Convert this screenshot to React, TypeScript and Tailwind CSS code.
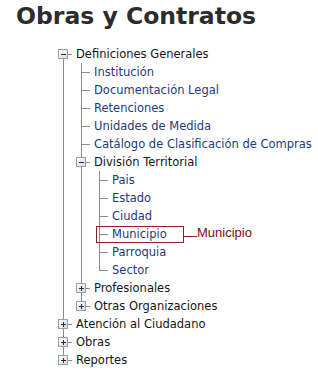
import type { ReactNode } from 'react';

type Node = {
  label: string;
  open?: boolean;
  children?: Node[];
  mark?: boolean;
};

const tree: Node[] = [
  {
    label: 'Definiciones Generales',
    open: true,
    children: [
      { label: 'Institución' },
      { label: 'Documentación Legal' },
      { label: 'Retenciones' },
      { label: 'Unidades de Medida' },
      { label: 'Catálogo de Clasificación de Compras' },
      {
        label: 'División Territorial',
        open: true,
        children: [
          { label: 'Pais' },
          { label: 'Estado' },
          { label: 'Ciudad' },
          { label: 'Municipio', mark: true },
          { label: 'Parroquia' },
          { label: 'Sector' },
        ],
      },
      { label: 'Profesionales', children: [{ label: '' }] },
      { label: 'Otras Organizaciones', children: [{ label: '' }] },
    ],
  },
  { label: 'Atención al Ciudadano', children: [{ label: '' }] },
  { label: 'Obras', children: [{ label: '' }] },
  { label: 'Reportes', children: [{ label: '' }] },
];

const LINE = '#8c8c8c';

// one 18x18 gutter cell of the tree connectors
function Cell({ kind, top = true, bottom = false, open = false }: { kind: 'pipe' | 'blank' | 'leaf' | 'box'; top?: boolean; bottom?: boolean; open?: boolean }) {
  return (
    <svg width="18" height="18" className="shrink-0 block" shapeRendering="crispEdges">
      {kind === 'pipe' && <line x1="9.5" y1="0" x2="9.5" y2="18" stroke={LINE} />}
      {kind === 'leaf' && (
        <>
          <line x1="9.5" y1="0" x2="9.5" y2={bottom ? 18 : 9.5} stroke={LINE} />
          <line x1="9.5" y1="9.5" x2="18" y2="9.5" stroke={LINE} />
        </>
      )}
      {kind === 'box' && (
        <>
          <defs>
            <linearGradient id="bx" x1="0" y1="0" x2="1" y2="1">
              <stop offset="0" stopColor="#ffffff" />
              <stop offset="1" stopColor="#d4d8de" />
            </linearGradient>
          </defs>
          {top && <line x1="9.5" y1="0" x2="9.5" y2="4.5" stroke={LINE} />}
          {bottom && <line x1="9.5" y1="13.5" x2="9.5" y2="18" stroke={LINE} />}
          <line x1="13.5" y1="9.5" x2="18" y2="9.5" stroke={LINE} />
          <rect x="4.5" y="4.5" width="9" height="9" fill="url(#bx)" stroke="#9aa0a8" />
          <line x1="7" y1="9.5" x2="12" y2="9.5" stroke="#2e2e2e" />
          {!open && <line x1="9.5" y1="7" x2="9.5" y2="12" stroke="#2e2e2e" />}
        </>
      )}
    </svg>
  );
}

function renderNodes(nodes: Node[], trail: boolean[], root: boolean): ReactNode[] {
  const out: ReactNode[] = [];
  nodes.forEach((n, i) => {
    const hasNext = i < nodes.length - 1;
    const folder = !!n.children;
    out.push(
      <div key={trail.length + '-' + n.label} className="relative flex items-center h-[18px]">
        {trail.map((more, k) => (
          <Cell key={k} kind={more ? 'pipe' : 'blank'} />
        ))}
        {folder ? (
          <Cell kind="box" top={!(root && i === 0)} bottom={hasNext} open={n.open} />
        ) : (
          <Cell kind="leaf" bottom={hasNext} />
        )}
        <span className={'ml-[4px] whitespace-nowrap leading-[18px] ' + (folder ? 'text-[#141414]' : 'text-[#1d3b78]')}>
          {n.label}
        </span>
        {n.mark && (
          <>
            <div className="absolute left-[42px] top-[1px] w-[88px] h-[17px] border border-[#8e1f1f]" />
            <div className="absolute left-[129px] top-[11px] w-[14px] h-px bg-[#8e1f1f]" />
            <span className="absolute left-[143px] top-0 text-[13px] leading-[15px] text-[#7d0b0b] font-['Liberation_Sans',Arial,sans-serif]">
              Municipio
            </span>
          </>
        )}
      </div>
    );
    if (folder && n.open && n.children) {
      out.push(...renderNodes(n.children, [...trail, hasNext], false));
    }
  });
  return out;
}

export default function App() {
  return (
    <div className="w-[318px] h-[375px] bg-white overflow-hidden font-['DejaVu_Sans',Verdana,sans-serif]">
      <h1 className="pl-[16px] pt-[5px] text-[23.5px] leading-none font-bold text-[#2c2c2c]">Obras y Contratos</h1>
      <div className="mt-[16px] pl-[54px] text-[11.5px]">{renderNodes(tree, [], true)}</div>
    </div>
  );
}
